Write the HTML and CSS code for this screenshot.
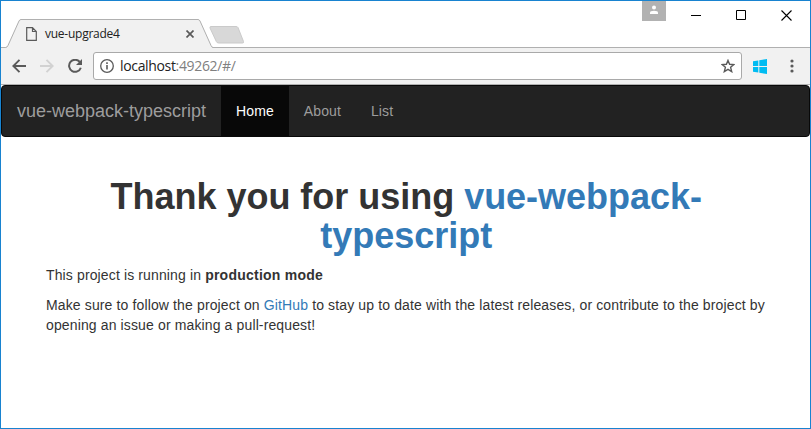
FILE: index.html
```html
<!DOCTYPE html>
<html lang="en">
<head>
<meta charset="utf-8">
<title>vue-upgrade4</title>
<link rel="stylesheet" href="styles.css">
</head>
<body>
<div class="window">
  <header class="titlebar">
    <div class="tab">
      <svg class="tab-shape" width="212" height="30" viewBox="0 0 212 30">
        <path d="M0 28.5H5.5L18 1.5Q18.5.5 20 .5H197Q198.500.5 199 1.500L211 28.500H212V30H0Z" fill="#f1f1f1"/>
        <path d="M0 28.500H4.500Q6 28.500 7 26.500L18 2Q18.700.5 20 .5H197Q198.300.5 199 2L210 26.500Q211 28.500 212 28.500" fill="none" stroke="#b0b0b0"/>
      </svg>
      <svg class="tab-file" width="11" height="14" viewBox="0 0 11 14"><path d="M.7.7H6.500L10.300 4.500V13.300H.7ZM6.500.7V4.500H10.300" fill="none" stroke="#5a5a5a" stroke-width="1.200"/></svg>
      <span class="tab-title">vue-upgrade4</span>
      <svg class="tab-close" width="8" height="8" viewBox="0 0 8 8"><path d="M.5.5L7.500 7.500M7.500.5L.5 7.500" stroke="#5a5a5a" stroke-width="1.700"/></svg>
    </div>
    <svg class="new-tab" width="36" height="18" viewBox="0 0 36 18"><path d="M2 .5H27Q28.500.5 29 1.500L34.500 15.500Q35 17 33.500 17H9.500Q8 17 7.300 15.500L1 2Q.5.5 2 .5Z" fill="#d8d8d8" stroke="#cacaca"/></svg>
    <div class="controls">
      <div class="profile"><svg width="10" height="10" viewBox="0 0 10 10"><circle cx="5" cy="2.500" r="2" fill="#fff"/><path d="M1 9V7.500Q1 5.800 5 5.800T9 7.500V9Z" fill="#fff"/></svg></div>
      <svg class="minimize" width="10" height="10" viewBox="0 0 10 10"><path d="M0 5.500H10" stroke="#000"/></svg>
      <svg class="maximize" width="10" height="10" viewBox="0 0 10 10"><path d="M.5.5H9.500V9.500H.5Z" fill="none" stroke="#000"/></svg>
      <svg class="close" width="11" height="11" viewBox="0 0 11 11"><path d="M.5.5L10.500 10.500M10.500.5L.5 10.500" stroke="#000" stroke-width="1.100"/></svg>
    </div>
  </header>

  <div class="toolbar">
    <svg class="back" width="14" height="14" viewBox="0 0 14 14"><path d="M14 7H1.500M7.500.8L1.300 7L7.500 13.200" fill="none" stroke="#5a5a5a" stroke-width="1.900"/></svg>
    <svg class="forward" width="14" height="14" viewBox="0 0 14 14"><path d="M0 7H12.500M6.500.8L12.700 7L6.500 13.200" fill="none" stroke="#d2d2d2" stroke-width="1.900"/></svg>
    <svg class="reload" width="14" height="14" viewBox="0 0 14 14"><path d="M11.700 2.900A6 6 0 1 0 12.800 8.700" fill="none" stroke="#5a5a5a" stroke-width="2"/><path d="M14 0V6H8Z" fill="#5a5a5a"/></svg>
    <div class="address">
      <svg class="info" width="14" height="14" viewBox="0 0 14 14"><circle cx="7" cy="7" r="6.300" fill="none" stroke="#5a5a5a" stroke-width="1.300"/><path d="M7 6V10.500M7 3.300V4.900" stroke="#5a5a5a" stroke-width="1.600"/></svg>
      <span class="url">localhost<span class="url-rest">:49262/#/</span></span>
      <svg class="star" width="14" height="14" viewBox="0 0 14 14"><path d="M7 1.400L8.600 5.300L12.900 5.600L9.600 8.300L10.700 12.600L7 10.300L3.300 12.600L4.400 8.300L1.100 5.600L5.400 5.300Z" fill="none" stroke="#5a5a5a" stroke-width="1.400"/></svg>
    </div>
    <svg class="windows" width="14" height="15" viewBox="0 0 14 15"><path d="M0 2.200L5.300 1.400V7H0ZM6.300 1.200L14 0V7H6.300ZM0 8H5.300V13.600L0 12.800ZM6.300 8H14V15L6.300 13.800Z" fill="#00bcf2"/></svg>
    <svg class="menu" width="4" height="14" viewBox="0 0 4 14"><g fill="#5a5a5a"><circle cx="2" cy="2" r="1.600"/><circle cx="2" cy="7" r="1.600"/><circle cx="2" cy="12" r="1.600"/></g></svg>
  </div>

  <nav class="navbar">
    <a class="brand">vue-webpack-typescript</a>
    <a class="nav-link active">Home</a>
    <a class="nav-link">About</a>
    <a class="nav-link">List</a>
  </nav>

  <main class="container">
    <h1>Thank you for using <a>vue-webpack-typescript</a></h1>
    <p>This project is running in <strong>production mode</strong></p>
    <p>Make sure to follow the project on <a>GitHub</a> to stay up to date with the latest releases, or contribute to the broject by opening an issue or making a pull-request!</p>
  </main>
</div>
</body>
</html>
```
FILE: styles.css
```css
* { box-sizing: border-box; }

body {
  margin: 0;
  font: 14px/20px "Liberation Sans", Arial, sans-serif;
  color: #333;
  background: #fff;
}

svg { display: block; flex: none; }

.window {
  height: 429px;
  border: 1px solid #1883d0;
  overflow: hidden;
}

/* Title bar */
.titlebar {
  display: flex;
  align-items: flex-start;
  height: 47px;
  background: linear-gradient(#b0b0b0, #b0b0b0) 0 46px / 100% 1px no-repeat;
}

.tab {
  position: relative;
  display: flex;
  align-items: center;
  width: 212px;
  height: 29px;
  margin-top: 18px;
  padding-left: 25px;
}

.tab-shape {
  position: absolute;
  left: 0;
  top: 0;
}

.tab-file,
.tab-title,
.tab-close { position: relative; }

.tab-title {
  width: 141px;
  margin-left: 8px;
  font: 12px/16px "Open Sans", sans-serif;
  letter-spacing: -0.25px;
  color: #222;
}

.new-tab { margin: 25px 0 0 -4px; }

.controls {
  display: flex;
  margin-left: auto;
}

.profile {
  display: flex;
  justify-content: center;
  width: 24px;
  height: 20px;
  padding-top: 4px;
  background: #b2b2b2;
}

.minimize { margin: 9px 0 0 25px; }
.maximize { margin: 9px 0 0 35px; }
.close { margin: 9px 18px 0 35px; }

/* Toolbar */
.toolbar {
  display: flex;
  align-items: center;
  height: 37px;
  padding: 0 16px 0 11px;
  background: #f1f1f1;
  border-bottom: 1px solid #b0b0b0;
}

.forward { margin-left: 14px; }
.reload { margin-left: 14px; }

.address {
  display: flex;
  align-items: center;
  flex: 1;
  height: 28px;
  margin-left: 11px;
  padding: 0 6px;
  border: 1px solid #a9a9a9;
  border-radius: 3px;
  background: #fff;
}

.url {
  flex: 1;
  margin-left: 6px;
  font: 14px/20px "Open Sans", sans-serif;
  letter-spacing: -0.34px;
  color: #222;
}

.url-rest { color: #808080; }
.windows { margin-left: 11px; }
.menu { margin-left: 23px; }

/* Page */
.navbar {
  display: flex;
  height: 52px;
  border: 1px solid #080808;
  border-radius: 4px;
  background: #222;
}

.brand,
.nav-link {
  padding: 15px;
  color: #9d9d9d;
}

.brand { font-size: 18px; }
.nav-link { letter-spacing: 0.1px; }

.nav-link.active {
  color: #fff;
  background: #080808;
}

.container {
  width: 750px;
  margin: 0 auto;
  padding: 40px 14px 0 15.5px;
}

h1 {
  margin: 0 0 10px;
  font-size: 36px;
  line-height: 39px;
  letter-spacing: -0.02px;
  text-align: center;
}

p {
  margin: 0 -6px 10px 0;
  letter-spacing: 0.13px;
}

strong { letter-spacing: 0.24px; }

h1 a,
p a { color: #337ab7; }
```
